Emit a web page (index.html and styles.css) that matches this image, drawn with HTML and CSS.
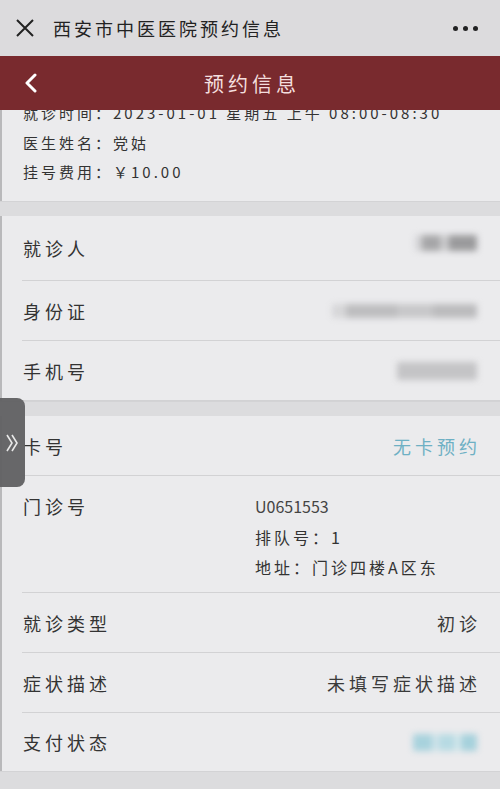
FILE: index.html
```html
<!DOCTYPE html>
<html lang="zh-CN">
<head>
    <meta charset="UTF-8">
    <title>西安市中医医院预约信息</title>
    <link rel="stylesheet" href="styles.css">
</head>
<body>
    <div class="wxbar">
        <svg class="close" width="18" height="18" viewBox="0 0 18 18">
            <path d="M1 1L17 17M17 1L1 17" stroke="#222" stroke-width="2" fill="none"/>
        </svg>
        <span class="wxtitle">西安市中医医院预约信息</span>
        <span class="more"><i></i><i></i><i></i></span>
    </div>
    <div class="navbar">
        <svg class="back" width="14" height="20" viewBox="0 0 14 20">
            <path d="M11 2L3 10L11 18" stroke="#fff" stroke-width="3" fill="none" stroke-linecap="round" stroke-linejoin="round"/>
        </svg>
        <span class="navtitle">预约信息</span>
    </div>
    <div class="page">
        <div class="info">
            <p>就诊时间：2023-01-01 星期五 上午 08:00-08:30</p>
            <p>医生姓名：党姑</p>
            <p>挂号费用：￥10.00</p>
        </div>
        <div class="band"></div>
        <div class="section">
            <div class="row first">
                <span class="label">就诊人</span>
                <span class="blur w66"></span>
            </div>
            <div class="row">
                <span class="label">身份证</span>
                <span class="blur w148"></span>
            </div>
            <div class="row">
                <span class="label">手机号</span>
                <span class="blur w80"></span>
            </div>
        </div>
        <div class="band"></div>
        <div class="section">
            <div class="row">
                <span class="label">卡号</span>
                <span class="link">无卡预约</span>
            </div>
            <div class="row tall">
                <span class="label">门诊号</span>
                <div class="detail">
                    <p>U0651553</p>
                    <p>排队号：1</p>
                    <p>地址：门诊四楼A区东</p>
                </div>
            </div>
            <div class="row">
                <span class="label">就诊类型</span>
                <span class="value">初诊</span>
            </div>
            <div class="row">
                <span class="label">症状描述</span>
                <span class="value">未填写症状描述</span>
            </div>
            <div class="row last">
                <span class="label">支付状态</span>
                <span class="blur paid"></span>
            </div>
        </div>
        <div class="band"></div>
    </div>
    <div class="sidetab">
        <svg width="12" height="18" viewBox="0 0 12 18">
            <path d="M1 1L6 9L1 17M6 1L11 9L6 17" stroke="#e8e8e8" stroke-width="1.6" fill="none"/>
        </svg>
    </div>
</body>
</html>
```
FILE: styles.css
```css
*{
    margin: 0;
    padding: 0;
}
body{
    width: 500px;
    height: 789px;
    overflow: hidden;
    background: #ebebed;
    font-family: "Noto Sans CJK SC", "Noto Sans", sans-serif;
    color: #333;
    box-shadow: inset 2px 0 0 #b9b9bb;
}
.wxbar{
    height: 56px;
    background: #dcdbdd;
    display: flex;
    align-items: center;
    padding: 0 22px 0 16px;
}
.close{
    margin-right: 19px;
}
.wxtitle{
    flex: 1;
    font-size: 18px;
    letter-spacing: 3px;
    color: #222;
}
.more{
    display: flex;
    gap: 5px;
}
.more i{
    width: 5px;
    height: 5px;
    border-radius: 50%;
    background: #222;
}
.navbar{
    height: 54px;
    background: #792a2e;
    display: flex;
    align-items: center;
    padding-left: 24px;
    position: relative;
}
.navtitle{
    position: absolute;
    left: 0;
    right: 0;
    text-align: center;
    font-size: 20px;
    letter-spacing: 4px;
    padding-left: 4px;
    color: #f3dede;
}
.page{
    height: 679px;
    overflow: hidden;
}
.info{
    margin-top: -13px;
    padding: 0 0 15px 23px;
    font-size: 15px;
    line-height: 29px;
    letter-spacing: 3px;
    color: #333;
}
.info p:first-child{
    line-height: 31px;
}
.band{
    height: 14px;
    background: #dcdcde;
    border-top: 1px solid #d3d3d5;
}
.band:last-child{
    height: 20px;
}
.section{
    padding-left: 22px;
}
.row{
    height: 59px;
    border-bottom: 1px solid #d2d2d4;
    display: flex;
    align-items: center;
    justify-content: space-between;
    padding-right: 23px;
}
.row.first{
    align-items: flex-start;
    padding-top: 19px;
    box-sizing: border-box;
    height: 65px;
}
.row.last{
    border-bottom: none;
    height: 58px;
}
.label{
    font-size: 18px;
    letter-spacing: 4px;
    padding-left: 1px;
}
.value{
    font-size: 18px;
    letter-spacing: 4px;
    margin-right: -4px;
    color: #3a3a3a;
}
.link{
    font-size: 18px;
    letter-spacing: 4px;
    margin-right: -4px;
    color: #6eb0c4;
}
.row.tall{
    height: 117px;
    align-items: flex-start;
    padding-top: 17px;
    box-sizing: border-box;
}
.detail{
    width: 222px;
    font-size: 16px;
    line-height: 30.5px;
    letter-spacing: 3px;
    margin-top: -2px;
    color: #333;
}
.detail p:first-child{
    letter-spacing: 0;
    color: #444;
}
.blur{
    display: block;
    height: 16px;
    background: #b4b4b6;
    filter: blur(3px);
    border-radius: 2px;
}
.w66{
    width: 62px;
    background: linear-gradient(90deg, #d4d4d6 0 12%, #a6a6a8 12% 40%, #cacacc 40% 55%, #9a9a9c 55% 100%);
}
.w148{
    width: 145px;
    height: 14px;
    background: linear-gradient(90deg, #d6d6d8 0 10%, #bdbdbf 10% 45%, #c7c7c9 45% 70%, #bbbbbd 70% 100%);
}
.w80{
    width: 80px;
    height: 18px;
    background: #c4c4c6;
}
.paid{
    width: 64px;
    height: 17px;
    background: linear-gradient(90deg, #a8d2dd 0 30%, #cfe3e9 30% 40%, #b7dae3 40% 65%, #d6e8ec 65% 75%, #a6d1dc 75% 100%);
}
.sidetab{
    position: absolute;
    left: 0;
    top: 398px;
    width: 25px;
    height: 89px;
    background: rgba(96, 96, 98, 0.95);
    border-radius: 0 8px 8px 0;
    display: flex;
    align-items: center;
    padding-left: 6px;
    box-sizing: border-box;
}
```
